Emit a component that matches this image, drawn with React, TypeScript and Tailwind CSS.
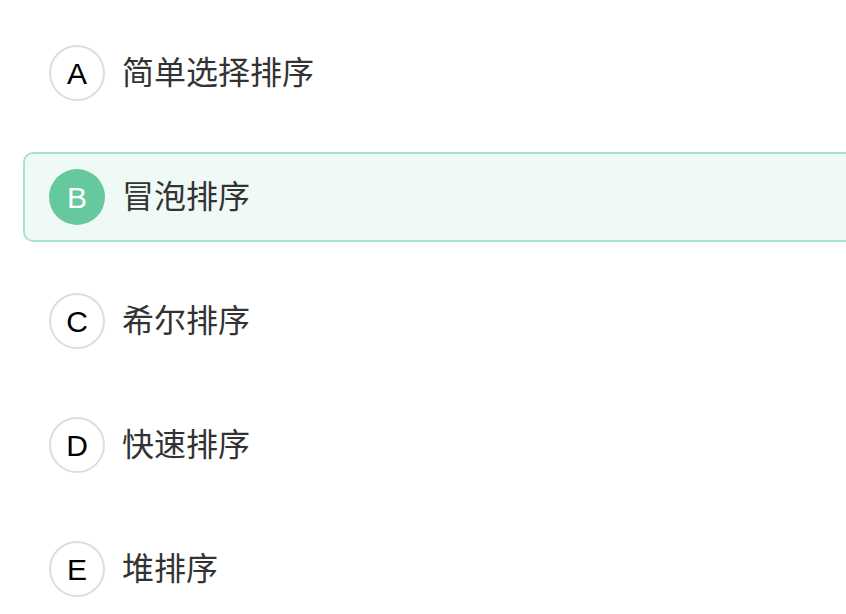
const options = [
  { key: 'A', label: '简单选择排序' },
  { key: 'B', label: '冒泡排序' },
  { key: 'C', label: '希尔排序' },
  { key: 'D', label: '快速排序' },
  { key: 'E', label: '堆排序' },
];

const selected = 'B';

export default function App() {
  return (
    <div
      className="w-[846px] h-[614px] overflow-hidden bg-white pt-[28px] pl-[23px]"
      style={{ fontFamily: '"Liberation Sans", "Noto Sans CJK SC", sans-serif' }}
    >
      <div className="w-[900px] flex flex-col gap-[34px]">
        {options.map((o) => {
          const active = o.key === selected;
          return (
            <div
              key={o.key}
              className={
                active
                  ? 'h-[90px] flex items-center gap-[17px] pl-[24px] rounded-[10px] border-2 border-[#a7e3cb] bg-[#eff9f5]'
                  : 'h-[90px] flex items-center gap-[17px] pl-[24px] rounded-[10px] border-2 border-transparent'
              }
            >
              <div
                className={
                  active
                    ? 'w-[56px] h-[56px] rounded-full bg-[#66c99e] text-white flex items-center justify-center text-[30px]'
                    : 'w-[56px] h-[56px] rounded-full border-2 border-[#dddddd] text-black flex items-center justify-center text-[30px]'
                }
              >
                {o.key}
              </div>
              <span className="text-[32px] text-[#333333]">{o.label}</span>
            </div>
          );
        })}
      </div>
    </div>
  );
}
